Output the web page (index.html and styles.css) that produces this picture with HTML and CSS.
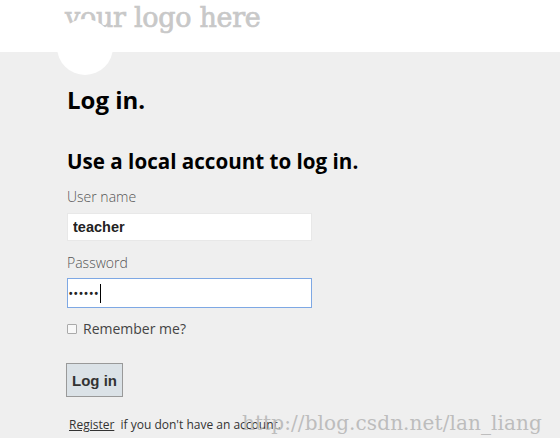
FILE: index.html
```html
<!DOCTYPE html>
<html lang="en">
<head>
  <meta charset="UTF-8" />
  <title>Log in</title>
  <link rel="stylesheet" href="styles.css">
</head>
<body>

  <header class="site-header">
    <p class="site-title">your logo here</p>
    <div class="logo-circle"></div>
  </header>

  <main class="content">
    <h1>Log in.</h1>

    <form id="login-form">
      <h2>Use a local account to log in.</h2>
      <label class="field-label" for="user">User name</label>
      <input type="text" id="user" class="text-box" value="teacher" />

      <label class="field-label" for="password">Password</label>
      <div class="text-box focused">
        <span class="dots">&bull;&bull;&bull;&bull;&bull;&bull;</span><span class="caret"></span>
      </div>

      <label class="check-label">
        <span class="check-box"></span>
        Remember me?
      </label>

      <button type="submit" class="login-btn">Log in</button>
    </form>

    <p class="register">
      <a href="#">Register</a>&nbsp; if you don't have an account.
      <span class="watermark">http://blog.csdn.net/lan_liang</span>
    </p>
  </main>

</body>
</html>
```

FILE: styles.css
```css
body {
  margin: 0;
  background-color: #efefef;
  color: #000;
  font-family: "Open Sans", sans-serif;
  height: 445px;
  overflow: hidden;
  position: relative;
}
.site-header {
  background: #fff;
  height: 52px;
  position: relative;
}
.site-title {
  margin: 0;
  padding: 0 0 0 65px;
  font-family: "DejaVu Serif", serif;
  font-size: 27px;
  line-height: 36px;
  color: #c8c8c8;
  letter-spacing: -0.3px;
  -webkit-text-stroke: 0.7px #c8c8c8;
}
.logo-circle {
  position: absolute;
  left: 57px;
  top: 19px;
  width: 56px;
  height: 56px;
  border-radius: 50%;
  background: #fff;
}
.content {
  padding-left: 67px;
}
h1 {
  margin: 0;
  padding-top: 33px;
  font-size: 24px;
  font-weight: bold;
  line-height: 30px;
}
h2 {
  margin: 0;
  padding-top: 32px;
  font-size: 20.6px;
  font-weight: bold;
  line-height: 28px;
}
.field-label {
  display: block;
  margin-top: 12px;
  font-size: 14px;
  line-height: 20px;
  color: #555;
  font-weight: 300;
}
.text-box {
  display: block;
  box-sizing: border-box;
  width: 245px;
  height: 28px;
  margin-top: 6px;
  padding: 0 5px;
  border: 1px solid #e8e8e8;
  background: #fff;
  font-family: "Liberation Sans", Arial, sans-serif;
  font-size: 14.5px;
  font-weight: bold;
  color: #222;
}
.text-box.focused {
  border: 1px solid #7ea8e4;
  display: flex;
  align-items: center;
  height: 30px;
  margin-top: 5px;
  padding-left: 1px;
}
.dots {
  font-size: 10px;
  letter-spacing: 1.6px;
}
.caret {
  display: inline-block;
  width: 1px;
  height: 19px;
  background: #000;
}
.check-label {
  display: flex;
  align-items: center;
  gap: 6px;
  margin-top: 11px;
  font-size: 14px;
  color: #444;
}
.check-box {
  width: 8px;
  height: 8px;
  border: 1px solid #aaa;
  background: #f8f8f8;
  border-radius: 1px;
}
.login-btn {
  display: block;
  margin-top: 25px;
  margin-left: -1px;
  width: 57px;
  height: 34px;
  background-color: #dbe2e7;
  border: 1px solid #999;
  font-family: "Liberation Sans", Arial, sans-serif;
  font-size: 15px;
  font-weight: bold;
  color: #333;
  padding: 0;
}
.register {
  margin: 19px 0 0 2px;
  font-size: 12px;
  color: #333;
  position: relative;
}
.register a {
  color: #333;
}
.watermark {
  position: absolute;
  left: 173px;
  top: -5px;
  font-family: "DejaVu Serif", serif;
  font-size: 20px;
  letter-spacing: 0.1px;
  color: #bdbdbd;
  white-space: nowrap;
}
body::after {
  content: "";
  position: absolute;
  left: 0;
  right: 0;
  bottom: 0;
  height: 7px;
  background: #fff;
}
```
